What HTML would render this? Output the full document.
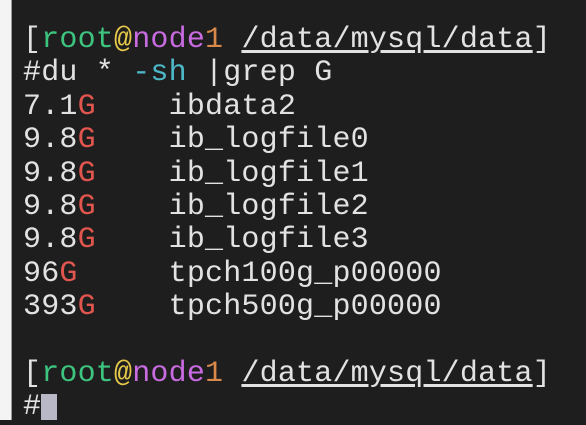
<!DOCTYPE html>
<html><head><style>
html,body{margin:0;padding:0;width:586px;height:420px;overflow:hidden;background:#1e1e1e;}
.l{position:absolute;left:0;top:0;width:11px;height:420px;background:#f4f4f4;border-right:1px solid #9a9a9a;}
pre{position:absolute;left:23px;top:24px;margin:0;font-family:"Liberation Mono",monospace;font-size:30px;letter-spacing:0.2px;line-height:33.4px;color:#e2e2e2;}
.g{color:#3dc47f}.y{color:#e5c84a}.m{color:#c86ae0}.o{color:#d98a4a}.c{color:#4db8c8}.r{color:#e0564e}
u{text-decoration:underline;text-underline-offset:3px}
.cur{display:inline-block;width:16px;height:26px;background:#b8b8c6;vertical-align:-6px}
</style></head><body>
<div class="l"></div>
<pre>[<span class="g">root</span><span class="y">@</span><span class="m">node</span><span class="o">1</span> <u>/data/mysql/data</u>]
#du * <span class="c">-sh</span> |grep G
7.1<span class="r">G</span>    ibdata2
9.8<span class="r">G</span>    ib_logfile0
9.8<span class="r">G</span>    ib_logfile1
9.8<span class="r">G</span>    ib_logfile2
9.8<span class="r">G</span>    ib_logfile3
96<span class="r">G</span>     tpch100g_p00000
393<span class="r">G</span>    tpch500g_p00000

[<span class="g">root</span><span class="y">@</span><span class="m">node</span><span class="o">1</span> <u>/data/mysql/data</u>]
#<span class="cur"></span></pre>
</body></html>
